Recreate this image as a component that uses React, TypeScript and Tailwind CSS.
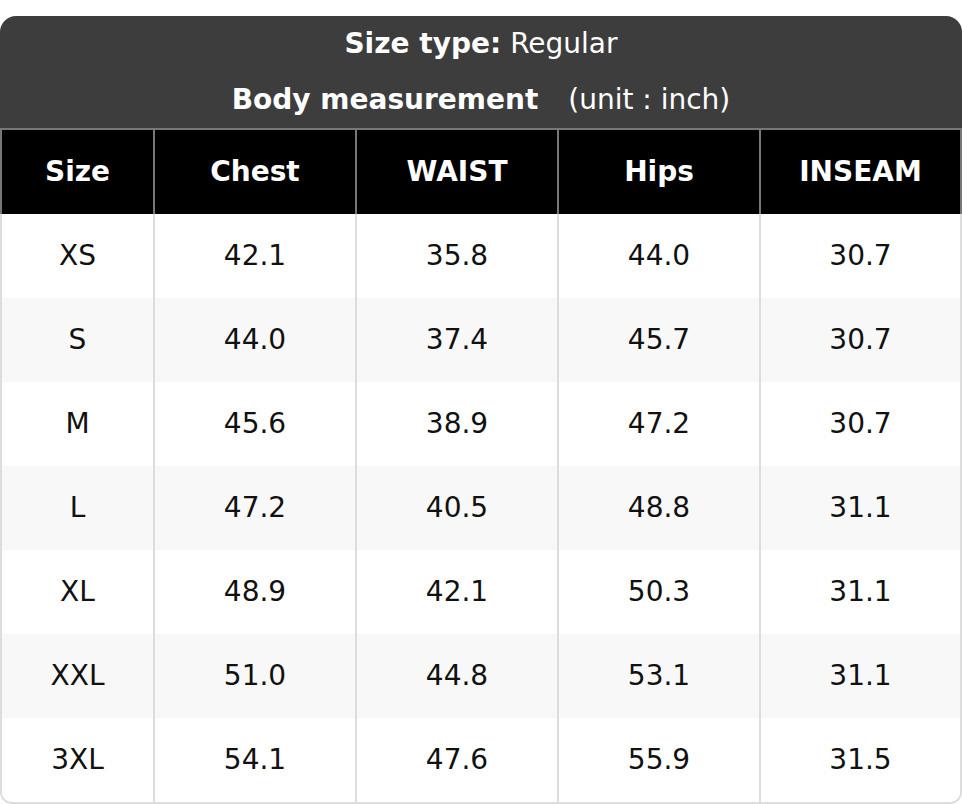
const columns = ["Size", "Chest", "WAIST", "Hips", "INSEAM"];

const rows = [
  ["XS", "42.1", "35.8", "44.0", "30.7"],
  ["S", "44.0", "37.4", "45.7", "30.7"],
  ["M", "45.6", "38.9", "47.2", "30.7"],
  ["L", "47.2", "40.5", "48.8", "31.1"],
  ["XL", "48.9", "42.1", "50.3", "31.1"],
  ["XXL", "51.0", "44.8", "53.1", "31.1"],
  ["3XL", "54.1", "47.6", "55.9", "31.5"],
];

const gridCols = "grid grid-cols-[153px_202px_202px_202px_199px]";

export default function App() {
  return (
    <div className="w-[962px] bg-white pt-[16px] font-['DejaVu_Sans',sans-serif] text-[28px]">
      <div className="rounded-t-[16px] overflow-hidden">
        {/* title block */}
        <div className="bg-[#3d3d3d] text-white flex flex-col">
          <div className="h-[56px] flex items-center justify-center">
            <span className="font-bold">Size type:</span>
            <span className="pl-[9px]">Regular</span>
          </div>
          <div className="h-[56px] flex items-center justify-center">
            <span className="font-bold">Body measurement</span>
            <span className="pl-[30px]">(unit : inch)</span>
          </div>
        </div>

        {/* column headings */}
        <div className={`${gridCols} h-[86px] bg-black text-white font-bold border-x-2 border-t-2 border-[#777]`}>
          {columns.map((c, i) => (
            <div
              key={c}
              className={`flex items-center justify-center ${i < columns.length - 1 ? "border-r-2 border-[#777]" : ""}`}
            >
              {c}
            </div>
          ))}
        </div>
      </div>

      {/* rows */}
      <div className="border-x-2 border-b-2 border-[#dddddd] rounded-b-[12px] overflow-hidden text-[#111]">
        {rows.map((r, idx) => (
          <div key={r[0]} className={`${gridCols} h-[84px] ${idx % 2 === 1 ? "bg-[#f8f8f8]" : "bg-white"}`}>
            {r.map((v, i) => (
              <div
                key={i}
                className={`flex items-center justify-center ${i < r.length - 1 ? "border-r-2 border-[#dddddd]" : ""}`}
              >
                {v}
              </div>
            ))}
          </div>
        ))}
      </div>
    </div>
  );
}
